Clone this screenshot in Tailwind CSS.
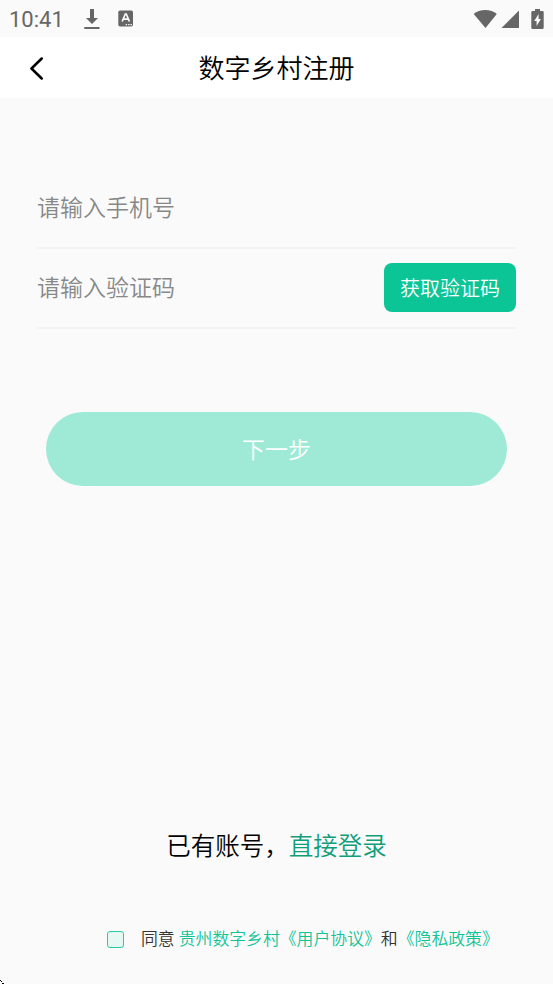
<!DOCTYPE html>
<html lang="zh-CN">
<head>
  <meta charset="UTF-8" />
  <meta name="viewport" content="width=device-width, initial-scale=1.0"/>
  <title>数字乡村注册</title>
  <script src="https://cdn.jsdelivr.net/npm/@tailwindcss/browser@4"></script>
</head>
<body class="relative flex h-[984px] w-[553px] flex-col overflow-hidden bg-[#fafafa] font-['Noto_Sans_CJK_SC',sans-serif] font-[350] text-black">

  <!-- STATUS BAR -->
  <div class="flex h-[37px] shrink-0 items-center bg-[#fafafa] pl-[9px] pr-[9px] text-[#666666]">
    <span class="w-[75px] pt-[2px] font-['Roboto',sans-serif] text-[22px] leading-[22px] font-normal">10:41</span>
    <svg class="h-[22px] w-4" viewBox="0 0 16 22" fill="currentColor">
      <path d="M6 1h4v9h4l-6 6-6-6h4zM0.300 19h15.200v2H0.300z"/>
    </svg>
    <svg class="ml-[18px] h-[17px] w-4" viewBox="0 0 16 17">
      <rect x="0.300" y="0.500" width="14.700" height="16" rx="1.700" fill="#666666"/>
      <path d="M4.200 11.500 7.300 4h1l3.100 7.500M5.600 9.200h4.400" fill="none" stroke="#fafafa" stroke-width="1.700"/>
      <path d="M7.700 14h1.400v1.300H7.700zM10.200 14h1.400v1.300h-1.400zM12.500 14h1.400v1.300h-1.400z" fill="#fafafa"/>
    </svg>
    <svg class="ml-auto h-[18px] w-6" viewBox="0 0 24 18" fill="currentColor">
      <path d="M12.500 18 0.700 4C3.700 1.600 7.700 0 12.300 0s8.500 1.600 11.500 4z"/>
    </svg>
    <svg class="ml-1 h-[18px] w-[18px]" viewBox="0 0 18 18" fill="currentColor">
      <path d="M0.500 18 18 0.500v17.500z"/>
    </svg>
    <svg class="ml-3 h-5 w-[13px]" viewBox="0 0 13 20">
      <path d="M4 0h5v2h2.500Q12.700 2 12.700 3.200v15.300Q12.700 20 11.400 20H1.600Q0.300 20 0.300 18.500V3.200Q0.300 2 1.500 2H4z" fill="#666666"/>
      <path d="M7.600 5v5h2.300L5.600 17v-5H3.200z" fill="#fafafa"/>
    </svg>
  </div>

  <!-- HEADER -->
  <header class="grid h-[61px] shrink-0 grid-cols-[60px_1fr_60px] items-center bg-white">
    <svg class="ml-[29px] h-6 w-4" viewBox="0 0 16 24" fill="none" stroke="#000000" stroke-width="2.500" stroke-linecap="round" stroke-linejoin="round">
      <path d="M12.700 2.500 2.500 12.500l10.200 10"/>
    </svg>
    <h1 class="pb-[2px] text-center text-[26px] leading-[38px]">数字乡村注册</h1>
  </header>

  <main class="flex flex-1 flex-col px-[37px] pt-[70px]">

    <!-- FORM -->
    <div class="flex h-[81px] items-center border-b-2 border-[#f3f3f3] pb-[3px] text-[23px] text-[#888888]">请输入手机号</div>
    <div class="flex h-20 items-center justify-between border-b-2 border-[#f3f3f3] pb-[2px]">
      <span class="pb-px text-[23px] text-[#888888]">请输入验证码</span>
      <button class="h-[49px] w-[132px] rounded-lg bg-[#0bc596] pt-px text-[20px] text-white">获取验证码</button>
    </div>
    <button class="mx-[9px] mt-[83px] h-[74px] rounded-full bg-[#9eead6] pb-[2px] text-[23px] text-white">下一步</button>

    <!-- LOGIN LINK -->
    <p class="mt-[341px] text-center text-[24.500px] leading-9">已有账号，<a class="text-[#109d7a]">直接登录</a></p>

    <!-- AGREEMENT -->
    <div class="mt-[63px] flex items-center pl-[70px] text-[16.850px] leading-6 text-[#333333]">
      <span class="mr-[17px] mt-[2px] h-[17px] w-[17px] rounded-[3px] border border-[#2bcba2] bg-[#e6f8f3]"></span>
      <span>同意</span>
      <a class="ml-1 text-[#10c497]">贵州数字乡村《用户协议》</a>
      <span>和</span>
      <a class="text-[#10c497]">《隐私政策》</a>
    </div>
  </main>

  <!-- corner mark -->
  <svg class="absolute bottom-0 left-0 h-1 w-1" viewBox="0 0 4 4" shape-rendering="crispEdges">
    <path d="M0 0h1v1H0zM1 1h1v1H1zM2 3h2v1H2z"/>
  </svg>
</body>
</html>
